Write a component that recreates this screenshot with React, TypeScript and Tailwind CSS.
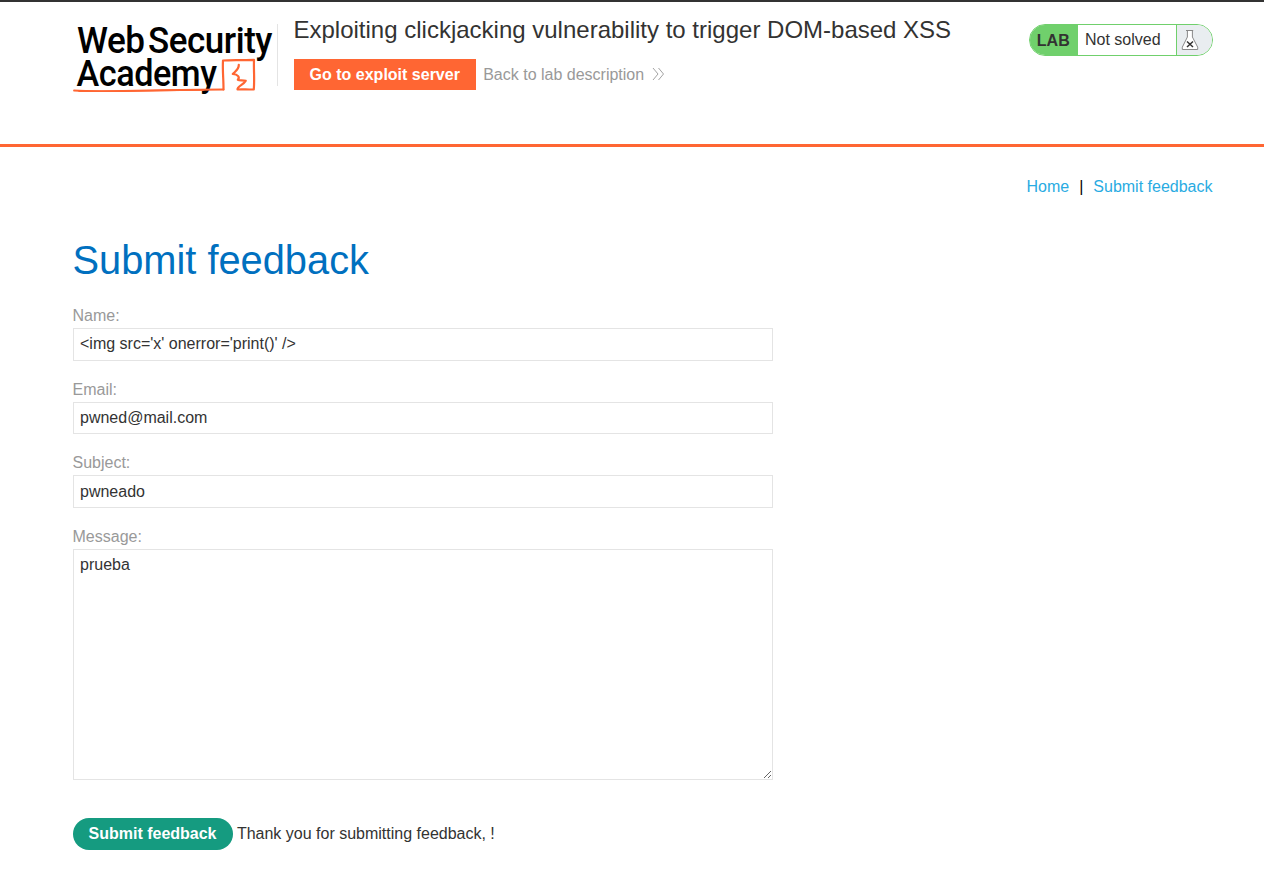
import React from "react";

function Logo() {
  return (
    <svg width="204" height="80" viewBox="0 0 204 80" className="block shrink-0 overflow-visible" aria-label="Web Security Academy">
      <g fontFamily="Roboto, sans-serif" fontWeight="500" fill="#000" letterSpacing="-0.5">
        <text x="4" y="35" fontSize="37.5" textLength="67.5" lengthAdjust="spacingAndGlyphs">Web</text>
        <text x="75" y="35" fontSize="37.5" textLength="124" lengthAdjust="spacingAndGlyphs">Security</text>
        <text x="3.5" y="67.7" fontSize="37.5" textLength="140" lengthAdjust="spacingAndGlyphs">Academy</text>
      </g>
      <g fill="none" stroke="#ff6633" strokeLinecap="round" strokeLinejoin="round">
        <path d="M1 72.5 C30 74.4 80 71.8 150.5 71.5" strokeWidth="1.8" />
        <path d="M6 73.2 C40 74 75 72.4 130 72" strokeWidth="1.5" />
        <path d="M150.5 71.5 C150.6 62 149.4 52 150 42.5 C160 42.2 170 42.2 181 41.8 C180.6 52 181.7 61 180.8 71.3 C175 71.9 170 70.9 164.5 71.5 C164.2 68 170.5 67 172.8 62.8 C170 61.8 166.5 62.8 164.8 61.8 C167.2 59.2 165 56.5 159.8 56 C162 53.5 166 51.5 165.8 46.8" strokeWidth="2.2" />
      </g>
    </svg>
  );
}

function Chevrons() {
  return (
    <svg width="13" height="14" viewBox="0 0 13 14" className="mb-px ml-2 shrink-0" fill="none" stroke="#999" strokeWidth="0.9">
      <path d="M1 1l5 6-5 6M6.5 1l5 6-5 6" />
    </svg>
  );
}

function Flask() {
  return (
    <svg width="18" height="22" viewBox="0 0 18 22" className="block" fill="none">
      <path d="M6.2 1.5V8L1.3 18.2V20.5H16.7V18.2L11.8 8V1.5Z" fill="#fff" />
      <path d="M5 1.5H12.2M6.4 1.5V8L1.3 18.2V20.5H16.7V18.2L11.4 8V1.5" stroke="#888" />
      <path d="M6 12.5l6 5.5M12 12.5l-6 5.5" stroke="#333" strokeWidth="1.5" />
    </svg>
  );
}

function Field({ label, value, className, inputClassName = "" }: { label: string; value: string; className: string; inputClassName?: string }) {
  return (
    <label className={"block " + className}>
      <span className="block h-[26px] leading-[27px] text-[#999]">{label}</span>
      <input
        defaultValue={value}
        className={"block h-[32.5px] w-[700px] rounded-none border border-[#e4e4e4] bg-white pr-1.5 pl-[6.5px] text-[#333] outline-none " + inputClassName}
      />
    </label>
  );
}

export default function App() {
  return (
    <div className="h-[884px] w-full overflow-hidden border-t-2 border-[#333332] bg-white font-['Liberation_Sans',Arial,sans-serif] text-base text-[#333332]">
      <header className="flex h-[145px] items-start border-b-3 border-[#ff6633] pr-[51px] pl-[73px]">
        <div className="pt-4">
          <Logo />
        </div>
        <div className="mt-[22px] h-[62px] w-px bg-[#e4e4e4]" />
        <div className="ml-[15.5px] pt-3">
          <h2 className="h-8 text-2xl leading-8 whitespace-nowrap">Exploiting clickjacking vulnerability to trigger DOM-based XSS</h2>
          <div className="mt-[13px] flex h-[31px] items-center">
            <a className="flex h-[31px] w-[182.5px] items-center justify-center bg-[#ff6633] font-bold text-white">Go to exploit server</a>
            <a className="ml-[7.2px] flex items-center text-[#999]">
              Back to lab description
              <Chevrons />
            </a>
          </div>
        </div>
        <div className="mt-[22px] ml-auto flex h-8 w-[184px] overflow-hidden rounded-2xl border border-[#70d06c]">
          <div className="w-12 bg-[#70d06c] pl-[6.8px] leading-[31px] font-bold">LAB</div>
          <div className="flex-1 pl-[7px] leading-[29px]">Not solved</div>
          <div className="flex w-9 items-center border-l border-[#70d06c] bg-[#e9edf0] pl-1">
            <Flask />
          </div>
        </div>
      </header>

      <nav className="flex h-20 items-center justify-end pr-[51.5px] text-[#29abe2]">
        <a>Home</a>
        <span className="mx-[10px] text-black">|</span>
        <a>Submit feedback</a>
      </nav>

      <main className="pl-[72.5px]">
        <h1 className="mt-[9px] h-[48px] text-[39.8px] leading-[48px] text-[#0070bf]">Submit feedback</h1>
        <form>
          <Field label="Name:" value="<img src='x' onerror='print()' />" className="mt-[18px]" />
          <Field label="Email:" value="pwned@mail.com" className="mt-[15px]" />
          <Field label="Subject:" value="pwneado" className="mt-[15px]" inputClassName="pt-px" />
          <label className="mt-[15px] block">
            <span className="block h-[26px] leading-[27px] text-[#999]">Message:</span>
            <textarea
              defaultValue="prueba"
              className="block h-[231px] w-[700px] resize rounded-none border border-[#e4e4e4] bg-white py-[5px] pr-1.5 pl-[6.5px] leading-5 text-[#333] outline-none"
            />
          </label>
          <div className="mt-[38px] flex items-center">
            <button type="button" className="h-8 w-[160px] rounded-full bg-[#159b80] font-bold text-white">
              Submit feedback
            </button>
            <span className="ml-[4.4px] leading-8">Thank you for submitting feedback, !</span>
          </div>
        </form>
      </main>
    </div>
  );
}
